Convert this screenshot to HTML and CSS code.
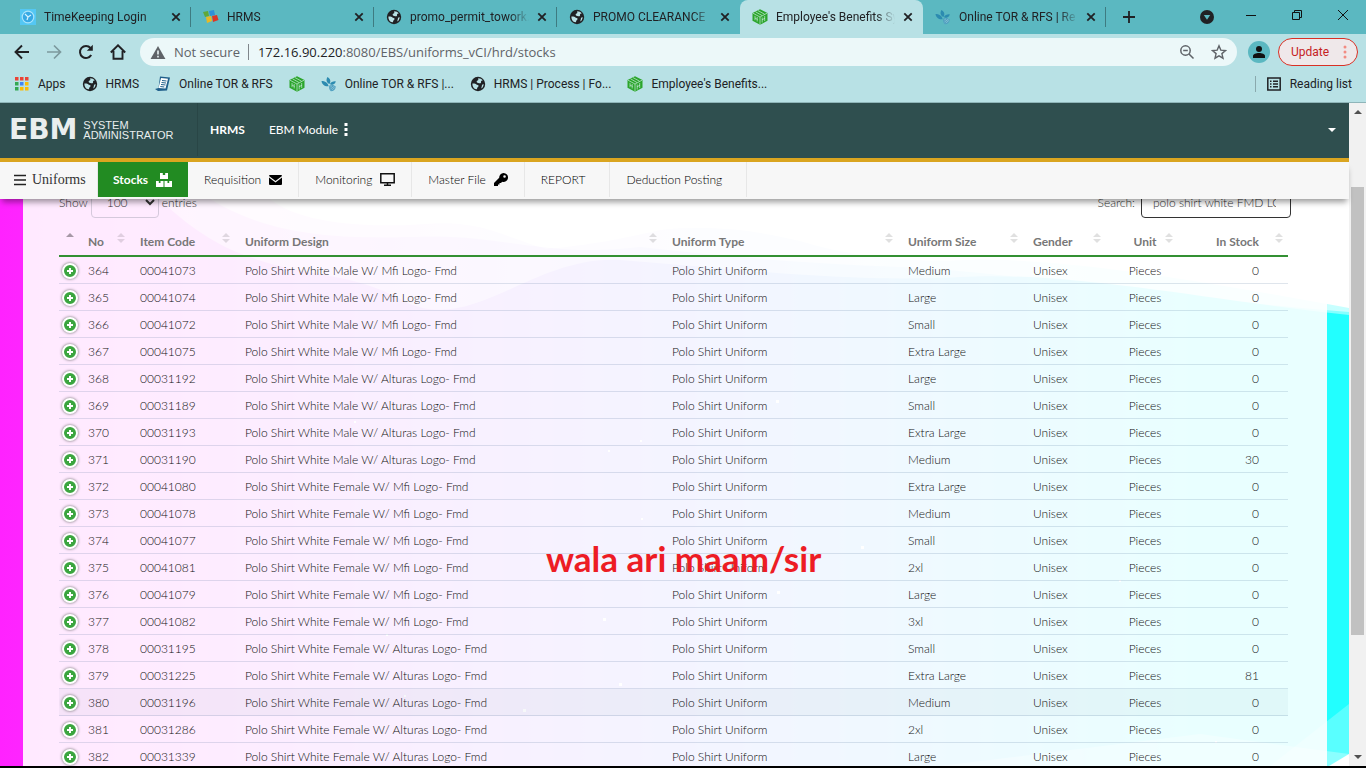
FILE: index.html
```html
<!DOCTYPE html>
<html lang="en">
<head>
<meta charset="utf-8">
<meta name="viewport" content="width=device-width, initial-scale=1">
<title>Employee's Benefits System</title>
<link rel="stylesheet" href="styles.css">
</head>
<body>
<svg class="symbols" aria-hidden="true">
  <symbol id="globe" viewBox="0 0 16 16"><circle cx="8" cy="8" r="7.2" fill="#202124"/><path d="M2.4 7.6c1.6-.4 3.200.1 4 .9.700.600 1.900.300 2.200 1.300.2 1-.900 1.200-1.300 1.900-.300.6-.1 1.500-1 1.600C4 13.300 2.300 10.600 2.400 7.600zM8.300 2.300c1.900 0 3.400.7 4.500 2.300-.8.2-1.400.1-1.700.700-.3.7.3 1.200-.3 1.700-.8.600-1.700 0-2.600-.1C7 6.700 6.300 6 6.800 5c.3-.7 1.300-.6 1.500-1.300.1-.5-.3-.9 0-1.400zM13.500 8c.2 1.900-.700 3.600-2 4.500-.3-.9.200-1.600.3-2.500.1-1 .7-1.700 1.700-2z" fill="#b8e1e5"/></symbol>
  <symbol id="cube" viewBox="0 0 16 16"><path d="M8 .2 15.500 4v7.800L8 15.800.5 11.800V4z" fill="#2ba52b"/><path d="M1 4.200 8 8l7-3.800M8 8v7.500M3.500 2.800 10 6.500M6 1.600l6.500 3.600M3 6.900v4.300M5.200 8v4.500M3 9l2.500 1.500M10.200 8.500v5M12.700 7v5M10 10.800l3-1.600" fill="none" stroke="#c9ebdc" stroke-width=".7"/></symbol>
  <symbol id="leaf" viewBox="0 0 16 16"><path d="M6.500 1c3 1.500 3.600 4.500 2 7C5.500 6.500 4.700 4 6.500 1zM.5 5c3.500 0 6.200 1.500 7.200 5.300C3.600 10.800 1 8.500.5 5zM9 8c1-2.200 3-3 5.800-2.800-.5 2.600-2.300 3.600-5 3.600z" fill="#2c8bb0"/><path d="M8.300 9.500c2.700-1 5-.5 6.500 1-.2 3-2.100 4.700-4.900 4.700-1.700-1.300-2.100-3.400-1.600-5.700z" fill="#4f9fc0"/><path d="m9.500 13 4-3M10.800 14l3-2.500M9.300 11l1.800-1.300" stroke="#a5d4de" stroke-width=".6"/></symbol>
  <symbol id="x" viewBox="0 0 10 10"><path d="m1.300 1.300 7.400 7.400m0-7.400L1.300 8.700" stroke="#202124" stroke-width="1.800"/></symbol>
</svg>

<header class="browser">
  <div class="tabstrip">
    <div class="tab"><svg class="ico" viewBox="0 0 16 16"><path fill="#54c7f3" d="M0 0h16v16H0z"/><circle cx="8" cy="8" r="5.800" fill="#38a9e4" stroke="#a9e4fb" stroke-width="1.200"/><path d="m5 5 3 3 3-2M8 8l-1 3" fill="none" stroke="#d4f3ff" stroke-width="1.200"/></svg><span class="tab-title">TimeKeeping Login</span><button class="close" aria-label="Close tab"><svg><use href="#x"/></svg></button></div>
    <div class="tab"><svg class="ico" viewBox="0 0 16 16"><path fill="#5fa83a" d="m0 3 5-1 1 5-4 1z"/><path fill="#2f8fd8" d="m6 2 5-1 1 5-5 1z"/><path fill="#e8b923" d="m3 8 5-1 1 5-5 2z"/><path fill="#dd3526" d="m9 7 5-1 1.500 5-5.500 2z"/></svg><span class="tab-title">HRMS</span><button class="close" aria-label="Close tab"><svg><use href="#x"/></svg></button></div>
    <div class="tab"><svg class="ico"><use href="#globe"/></svg><span class="tab-title">promo_permit_towork.</span><button class="close" aria-label="Close tab"><svg><use href="#x"/></svg></button></div>
    <div class="tab plain"><svg class="ico"><use href="#globe"/></svg><span class="tab-title">PROMO CLEARANCE</span><button class="close" aria-label="Close tab"><svg><use href="#x"/></svg></button></div>
    <div class="tab active"><svg class="ico"><use href="#cube"/></svg><span class="tab-title">Employee's Benefits Sy</span><button class="close" aria-label="Close tab"><svg><use href="#x"/></svg></button></div>
    <div class="tab"><svg class="ico"><use href="#leaf"/></svg><span class="tab-title">Online TOR &amp; RFS | Re</span><button class="close" aria-label="Close tab"><svg><use href="#x"/></svg></button></div>
    <button class="newtab" aria-label="New tab"><svg viewBox="0 0 12 12"><path d="M6 0v12M0 6h12" stroke="#202124" stroke-width="1.800"/></svg></button>
    <div class="window-controls">
      <button aria-label="Search tabs"><svg width="14" height="14" viewBox="0 0 14 14"><circle cx="7" cy="7" r="7" fill="#202124"/><path d="M3.800 5h6.400L7 9.800z" fill="#5bb8c1"/></svg></button>
      <button aria-label="Minimize"><svg width="10" height="10" viewBox="0 0 10 10"><path d="M0 5.500h10" stroke="#111"/></svg></button>
      <button aria-label="Restore"><svg width="10" height="10" viewBox="0 0 10 10"><path d="M.5 2.500h7v7h-7zM2.500 2.500v-2h7v7h-2" fill="none" stroke="#111"/></svg></button>
      <button aria-label="Close"><svg width="10" height="10" viewBox="0 0 10 10"><path d="m0 0 10 10M10 0 0 10" stroke="#111"/></svg></button>
    </div>
  </div>

  <div class="toolbar">
    <button aria-label="Back"><svg viewBox="0 0 16 16"><path d="M15 8H2M8 1.500 1.500 8 8 14.500" fill="none" stroke="#202124" stroke-width="1.900"/></svg></button>
    <button aria-label="Forward"><svg viewBox="0 0 16 16"><path d="M1 8h13M8 1.500 14.500 8 8 14.500" fill="none" stroke="#7c999d" stroke-width="1.700"/></svg></button>
    <button aria-label="Reload"><svg viewBox="0 0 16 16"><path d="M13.200 11A6 6 0 1 1 12.500 4" fill="none" stroke="#202124" stroke-width="2"/><path d="M14.800.8v6H8.800z" fill="#202124"/></svg></button>
    <button aria-label="Home"><svg viewBox="0 0 16 16"><path d="M.8 8.500 8 1.300l7.200 7.200M3.500 7v7.800h9V7" fill="none" stroke="#202124" stroke-width="1.900"/></svg></button>
    <div class="omnibox">
      <svg class="warn" viewBox="0 0 16 14"><path d="M8 0 16 14H0z" fill="#5f6368"/><path d="M8 4.800v4.400m0 1.300v1.800" stroke="#ecf8f9" stroke-width="1.700"/></svg>
      <span class="insecure">Not secure</span>
      <span class="url"><b>172.16.90.220</b>:8080/EBS/uniforms_vCI/hrd/stocks</span>
      <svg class="ico" viewBox="0 0 16 16"><circle cx="6.500" cy="6.500" r="4.700" fill="none" stroke="#5f6368" stroke-width="1.500"/><path d="m10 10 4.500 4.500M4.200 6.500h4.600" stroke="#5f6368" stroke-width="1.500"/></svg>
      <svg class="ico" viewBox="0 0 16 16"><path d="m8 1.800 1.800 4.300 4.700.4-3.600 3.100 1.100 4.600L8 11.800l-4 2.400 1.100-4.600-3.600-3.100 4.700-.4z" fill="none" stroke="#5f6368" stroke-width="1.400"/></svg>
    </div>
    <button class="avatar" aria-label="Profile"><svg viewBox="0 0 22 22"><circle cx="11" cy="11" r="11" fill="#5bb8c1"/><circle cx="11" cy="8" r="3" fill="#111"/><path d="M5 17v-2c0-2 3-3 6-3s6 1 6 3v2z" fill="#111"/></svg></button>
    <button class="update">Update<svg viewBox="0 0 4 14"><g fill="#f28b82"><circle cx="2" cy="2" r="1.500"/><circle cx="2" cy="7" r="1.500"/><circle cx="2" cy="12" r="1.500"/></g></svg></button>
  </div>

  <nav class="bookmarks">
    <a href="#"><svg class="ico" viewBox="0 0 16 16"><path fill="#ea4335" d="M1 1h3.500v3.500H1zM6 1h3.500v3.500H6zM11 1h3.500v3.500H11z"/><path fill="#34a853" d="M1 6h3.500v3.500H1zM1 11h3.500v3.500H1z"/><path fill="#4285f4" d="M6 6h3.500v3.500H6z"/><path fill="#fbbc05" d="M11 6h3.500v3.500H11zM6 11h3.500v3.500H6zM11 11h3.500v3.500H11z"/></svg>Apps</a>
    <a href="#"><svg class="ico"><use href="#globe"/></svg>HRMS</a>
    <a href="#"><svg class="ico" viewBox="0 0 16 16"><path d="m5 .5 10 1-3 13-9 .5-3-2 3.500-1z" fill="#205f8b"/><path d="m6 2 7 .8-2.500 9.700-7-.5z" fill="#fff"/><path d="m7 4.500 4.500.5M6.500 6.500l4.500.5M6 8.500l4.500.5M5.300 10.500l4 .5" stroke="#205f8b"/></svg>Online TOR &amp; RFS</a>
    <a href="#" aria-label="Employee's Benefits"><svg class="ico"><use href="#cube"/></svg></a>
    <a href="#"><svg class="ico"><use href="#leaf"/></svg>Online TOR &amp; RFS |...</a>
    <a href="#"><svg class="ico"><use href="#globe"/></svg>HRMS | Process | Fo...</a>
    <a href="#"><svg class="ico"><use href="#cube"/></svg>Employee's Benefits...</a>
    <a href="#" class="reading"><svg class="ico" viewBox="0 0 16 16"><path d="M1.800 2h12.400v12H1.800z" fill="none" stroke="#202124" stroke-width="1.500"/><path d="M4 5.200h1.500M7 5.200h5M4 8h1.500M7 8h5M4 10.800h1.500M7 10.800h5" stroke="#202124" stroke-width="1.400"/></svg>Reading list</a>
  </nav>
</header>

<div class="viewport">
  <div class="page">
    <header class="appbar">
      <a href="#" class="brand"><strong>EBM</strong><span>SYSTEM<br>ADMINISTRATOR</span></a>
      <a href="#" class="top-link current">HRMS</a>
      <a href="#" class="top-link">EBM Module<svg width="4" height="13" viewBox="0 0 4 13"><path d="M.5 0h3v3h-3zM.5 5h3v3h-3zM.5 10h3v3h-3z" fill="#fff"/></svg></a>
      <button class="account" aria-label="Account menu"></button>
    </header>
    <nav class="menu">
      <a href="#" class="menu-brand"><svg width="12" height="12" viewBox="0 0 12 12"><path d="M0 1.500h12M0 6h12M0 10.500h12" stroke="#222" stroke-width="1.600"/></svg>Uniforms</a>
      <a href="#" class="selected">Stocks<svg width="16" height="14" viewBox="0 0 16 14"><path d="M4 0h2.800v2h2.400V0H12v6H4zM0 8h2.800v2h1.700V8h3v6H0zM8.500 8h3v2h1.700V8H16v6H8.500z" fill="#fff"/></svg></a>
      <a href="#">Requisition<svg width="13" height="10" viewBox="0 0 13 10"><path d="M1 0h11q1 0 1 1L6.500 6 0 1q0-1 1-1zM0 2.500l6.500 5 6.500-5V9q0 1-1 1H1q-1 0-1-1z"/></svg></a>
      <a href="#">Monitoring<svg width="15" height="13" viewBox="0 0 15 13"><path d="M.8.800h13.400v8.900H.8zM7.500 10v2M4 12.300h7" fill="none" stroke="#111" stroke-width="1.500"/></svg></a>
      <a href="#">Master File<svg width="14" height="14" viewBox="0 0 14 14"><path fill-rule="evenodd" d="M9.500 0a4.500 4.500 0 1 1-1.300 8.800L7 10H5.500v1.500H4V13H0v-3l5.200-5.200A4.500 4.500 0 0 1 9.500 0zm1 2.200a1.300 1.300 0 1 0 .1 2.600 1.300 1.300 0 0 0-.1-2.600z"/></svg></a>
      <a href="#" class="wide">REPORT</a>
      <a href="#" class="wide">Deduction Posting</a>
    </nav>
    <main class="scene">
      <svg class="waves" viewBox="0 0 1349 567" preserveAspectRatio="none" aria-hidden="true">
        <defs><linearGradient id="sky"><stop offset="0" stop-color="#ff22ff"/><stop offset=".12" stop-color="#f638ff"/><stop offset=".5" stop-color="#8f8fff"/><stop offset=".9" stop-color="#22ffff"/><stop offset="1" stop-color="#22ffff"/></linearGradient></defs>
        <g fill="url(#sky)">
          <path opacity=".25" d="M0 0H270C300 25 370 29 425 25S500 36 546 50C590 46 620 40 660 31C710 25 760 32 800 42C840 54 900 66 980 60C1100 63 1210 84 1349 109V567H0z"/>
          <path opacity=".4" d="M0 0H210C290 50 390 36 450 38S560 58 640 48C730 58 800 64 900 68S1180 100 1349 113V567H0z"/>
          <path d="M0 0H160C250 90 330 60 400 100S530 56 620 61C740 70 850 84 960 78S1200 100 1349 116V567H0z"/>
        </g>
        <g fill="#fff"><path opacity=".25" d="M1349 505 1270 567h79z"/><path opacity=".3" d="M940 567 1200 535l149 20v12z"/><path d="m1329 567 20-12v12z"/>
          <path d="M776 201h3v3h-3zM640 241h2v2h-2zM354 222h2v2h-2zM608 251h2v2h-2zM641 319h2v2h-2zM861 347h3v3h-3zM777 392h3v3h-3zM603 419h3v3h-3zM386 435h2v2h-2zM404 496h2v2h-2zM619 484h3v3h-3zM523 510h3v3h-3zM1119 381h2v2h-2zM1215 542h2v2h-2z"/></g>
      </svg>
      <section class="card">
        <div class="controls">
          <label class="length">Show <select><option>100</option></select> entries</label>
          <label class="search">Search: <input type="text" value="polo shirt white FMD LOGO"></label>
        </div>
        <table class="stocks">
          <colgroup><col class="c-plus"><col class="c-no"><col class="c-code"><col><col class="c-type"><col class="c-size"><col class="c-gender"><col class="c-unit"><col class="c-stock"></colgroup>
          <thead><tr><th class="asc"></th><th>No</th><th>Item Code</th><th>Uniform Design</th><th>Uniform Type</th><th>Uniform Size</th><th>Gender</th><th>Unit</th><th>In Stock</th></tr></thead>
          <tbody>
            <tr><td><button class="plus" aria-label="Expand"></button></td><td>364</td><td>00041073</td><td>Polo Shirt White Male W/ Mfi Logo- Fmd</td><td>Polo Shirt Uniform</td><td>Medium</td><td>Unisex</td><td>Pieces</td><td>0</td></tr>
            <tr><td><button class="plus" aria-label="Expand"></button></td><td>365</td><td>00041074</td><td>Polo Shirt White Male W/ Mfi Logo- Fmd</td><td>Polo Shirt Uniform</td><td>Large</td><td>Unisex</td><td>Pieces</td><td>0</td></tr>
            <tr><td><button class="plus" aria-label="Expand"></button></td><td>366</td><td>00041072</td><td>Polo Shirt White Male W/ Mfi Logo- Fmd</td><td>Polo Shirt Uniform</td><td>Small</td><td>Unisex</td><td>Pieces</td><td>0</td></tr>
            <tr><td><button class="plus" aria-label="Expand"></button></td><td>367</td><td>00041075</td><td>Polo Shirt White Male W/ Mfi Logo- Fmd</td><td>Polo Shirt Uniform</td><td>Extra Large</td><td>Unisex</td><td>Pieces</td><td>0</td></tr>
            <tr><td><button class="plus" aria-label="Expand"></button></td><td>368</td><td>00031192</td><td>Polo Shirt White Male W/ Alturas Logo- Fmd</td><td>Polo Shirt Uniform</td><td>Large</td><td>Unisex</td><td>Pieces</td><td>0</td></tr>
            <tr><td><button class="plus" aria-label="Expand"></button></td><td>369</td><td>00031189</td><td>Polo Shirt White Male W/ Alturas Logo- Fmd</td><td>Polo Shirt Uniform</td><td>Small</td><td>Unisex</td><td>Pieces</td><td>0</td></tr>
            <tr><td><button class="plus" aria-label="Expand"></button></td><td>370</td><td>00031193</td><td>Polo Shirt White Male W/ Alturas Logo- Fmd</td><td>Polo Shirt Uniform</td><td>Extra Large</td><td>Unisex</td><td>Pieces</td><td>0</td></tr>
            <tr><td><button class="plus" aria-label="Expand"></button></td><td>371</td><td>00031190</td><td>Polo Shirt White Male W/ Alturas Logo- Fmd</td><td>Polo Shirt Uniform</td><td>Medium</td><td>Unisex</td><td>Pieces</td><td>30</td></tr>
            <tr><td><button class="plus" aria-label="Expand"></button></td><td>372</td><td>00041080</td><td>Polo Shirt White Female W/ Mfi Logo- Fmd</td><td>Polo Shirt Uniform</td><td>Extra Large</td><td>Unisex</td><td>Pieces</td><td>0</td></tr>
            <tr><td><button class="plus" aria-label="Expand"></button></td><td>373</td><td>00041078</td><td>Polo Shirt White Female W/ Mfi Logo- Fmd</td><td>Polo Shirt Uniform</td><td>Medium</td><td>Unisex</td><td>Pieces</td><td>0</td></tr>
            <tr><td><button class="plus" aria-label="Expand"></button></td><td>374</td><td>00041077</td><td>Polo Shirt White Female W/ Mfi Logo- Fmd</td><td>Polo Shirt Uniform</td><td>Small</td><td>Unisex</td><td>Pieces</td><td>0</td></tr>
            <tr><td><button class="plus" aria-label="Expand"></button></td><td>375</td><td>00041081</td><td>Polo Shirt White Female W/ Mfi Logo- Fmd</td><td>Polo Shirt Uniform</td><td>2xl</td><td>Unisex</td><td>Pieces</td><td>0</td></tr>
            <tr><td><button class="plus" aria-label="Expand"></button></td><td>376</td><td>00041079</td><td>Polo Shirt White Female W/ Mfi Logo- Fmd</td><td>Polo Shirt Uniform</td><td>Large</td><td>Unisex</td><td>Pieces</td><td>0</td></tr>
            <tr><td><button class="plus" aria-label="Expand"></button></td><td>377</td><td>00041082</td><td>Polo Shirt White Female W/ Mfi Logo- Fmd</td><td>Polo Shirt Uniform</td><td>3xl</td><td>Unisex</td><td>Pieces</td><td>0</td></tr>
            <tr><td><button class="plus" aria-label="Expand"></button></td><td>378</td><td>00031195</td><td>Polo Shirt White Female W/ Alturas Logo- Fmd</td><td>Polo Shirt Uniform</td><td>Small</td><td>Unisex</td><td>Pieces</td><td>0</td></tr>
            <tr><td><button class="plus" aria-label="Expand"></button></td><td>379</td><td>00031225</td><td>Polo Shirt White Female W/ Alturas Logo- Fmd</td><td>Polo Shirt Uniform</td><td>Extra Large</td><td>Unisex</td><td>Pieces</td><td>81</td></tr>
            <tr class="hovered"><td><button class="plus" aria-label="Expand"></button></td><td>380</td><td>00031196</td><td>Polo Shirt White Female W/ Alturas Logo- Fmd</td><td>Polo Shirt Uniform</td><td>Medium</td><td>Unisex</td><td>Pieces</td><td>0</td></tr>
            <tr><td><button class="plus" aria-label="Expand"></button></td><td>381</td><td>00031286</td><td>Polo Shirt White Female W/ Alturas Logo- Fmd</td><td>Polo Shirt Uniform</td><td>2xl</td><td>Unisex</td><td>Pieces</td><td>0</td></tr>
            <tr><td><button class="plus" aria-label="Expand"></button></td><td>382</td><td>00031339</td><td>Polo Shirt White Female W/ Alturas Logo- Fmd</td><td>Polo Shirt Uniform</td><td>Large</td><td>Unisex</td><td>Pieces</td><td>0</td></tr>
          </tbody>
        </table>
      </section>
      <p class="annotation">wala ari maam/sir</p>
    </main>
  </div>
  <div class="scrollbar" aria-hidden="true"><span class="up"></span><span class="thumb"></span><span class="down"></span></div>
</div>
</body>
</html>
```
FILE: styles.css
```css
* { box-sizing: border-box; }
body {
  margin: 0;
  height: 100vh;
  display: flex;
  flex-direction: column;
  overflow: hidden;
  border-bottom: 2px solid #000;
  font-family: Lato, "Open Sans", sans-serif;
  font-size: 12px;
  color: #111;
}
a { color: inherit; text-decoration: none; }
button { border: 0; padding: 0; background: none; font: inherit; color: inherit; display: flex; align-items: center; justify-content: center; }
svg { display: block; flex: none; }
.symbols { position: absolute; width: 0; height: 0; }
.ico { width: 16px; height: 16px; }

/* Browser frame */
.browser { flex: none; background: #b8e1e5; border-bottom: 1px solid #8fb5b9; font-family: Roboto, "Open Sans", sans-serif; color: #202124; }
.tabstrip { display: flex; height: 34px; padding-left: 8px; background: #5bb8c1; }
.tab { flex: 0 1 183px; min-width: 0; display: flex; align-items: center; gap: 8px; padding: 0 10px 0 12px; position: relative; }
.tab::after { content: ""; position: absolute; right: 0; top: 7px; height: 20px; width: 1px; background: #3e7b81; }
.tab.plain::after, .tab.active::after { display: none; }
.tab.active { background: #b8e1e5; border-radius: 8px 8px 0 0; }
.tab-title { flex: 1; min-width: 0; overflow: hidden; white-space: nowrap; mask-image: linear-gradient(90deg, #000 84%, transparent); }
.close svg { width: 10px; height: 10px; }
.newtab { width: 46px; }
.newtab svg { width: 12px; height: 12px; }
.window-controls { margin-left: auto; display: flex; padding-bottom: 4px; }
.window-controls button { width: 46px; }
.window-controls button:first-child { width: 42px; padding-top: 4px; }
.toolbar { display: flex; align-items: center; height: 36px; padding: 0 8px 0 14px; gap: 16px; }
.toolbar > button svg { width: 16px; height: 16px; }
.omnibox { flex: 1; display: flex; align-items: center; height: 28px; margin-left: -2px; padding: 0 10px; gap: 16px; border-radius: 14px; background: #ecf8f9; font-family: "Open Sans", sans-serif; font-size: 13px; color: #5f6368; }
.warn { width: 16px; height: 13px; }
.insecure { margin-left: -8px; padding-right: 8px; line-height: 16px; border-right: 1px solid #80868b; }
.url { flex: 1; margin-left: -7px; }
.url b { font-weight: 400; color: #202124; }
.toolbar .avatar { margin-left: -5px; }
.toolbar .avatar svg { width: 22px; height: 22px; }
.toolbar .update { height: 28px; margin-left: -8px; padding: 0 10px 0 12px; gap: 14px; border: 1px solid #d93025; border-radius: 14px; background: #efe8ea; color: #c5221f; }
.toolbar .update svg { width: 4px; height: 14px; }
.bookmarks { display: flex; align-items: center; height: 32px; padding: 0 14px 4px; gap: 16px; }
.bookmarks a { display: flex; align-items: center; gap: 8px; white-space: nowrap; }
.bookmarks .reading { margin-left: auto; padding-left: 10px; border-left: 1px solid #8aa9ad; }

/* Page frame */
.viewport { flex: 1; min-height: 0; display: flex; }
.page { flex: 1; min-width: 0; display: flex; flex-direction: column; }
.scrollbar { flex: none; width: 17px; background: #f1f1f1; display: flex; flex-direction: column; align-items: center; padding: 7px 0; }
.thumb { width: 13px; height: 69%; margin-top: 73px; margin-bottom: auto; background: #c1c1c1; }
.up { border: 4px solid transparent; border-top: 0; border-bottom-color: #505050; }
.down { border: 4px solid transparent; border-bottom: 0; border-top-color: #505050; }

.appbar { flex: none; display: flex; align-items: center; height: 59px; padding-bottom: 2px; background: #2f4f4f; border-bottom: 4px solid #daa520; color: #fff; }
.brand { display: flex; align-items: center; align-self: stretch; gap: 6px; width: 198px; padding-left: 9px; border-right: 1px solid #294646; font-family: "Liberation Sans", sans-serif; font-size: 11px; line-height: 10px; color: #e9eeee; }
.brand strong { font-family: "DejaVu Sans", sans-serif; font-size: 28px; line-height: 28px; }
.top-link { display: flex; align-items: center; gap: 6px; padding: 0 12px; }
.top-link.current { font-weight: 700; }
.account { margin-left: auto; margin-right: 13px; border: 4px solid transparent; border-top-color: #fff; border-bottom: 0; }

.menu { flex: none; position: relative; z-index: 2; display: flex; height: 37px; padding-bottom: 2px; background: #f7f7f7; box-shadow: 0 5px 6px -2px rgba(0, 0, 0, .4); color: #000; font-weight: 300; }
.menu a { display: flex; align-items: center; gap: 8px; padding: 0 16px; border-right: 1px solid #e7e7e7; white-space: nowrap; }
.menu .menu-brand { width: 98px; padding: 0 0 0 14px; gap: 6px; font: 14px "Liberation Serif", serif; color: #333; }
.menu .selected { padding: 0 15px; background: #228b22; border-color: #228b22; color: #fff; font-weight: 700; }
.menu .wide { padding-right: 24px; }

.scene { flex: 1; min-height: 0; position: relative; overflow: hidden; padding: 0 22px 0 23px; background: #fff; font-weight: 300; }
.waves { position: absolute; inset: 0; width: 100%; height: 100%; }
.card { position: relative; min-height: 100%; padding: 0 39px 0 36px; background: rgba(255, 255, 255, .9); }
.controls { display: flex; justify-content: space-between; height: 31px; margin: -12px -3px 8px 0; color: #333; }
.card::before { content: ""; display: table; }
.controls label { display: flex; align-items: center; gap: 3px; }
.controls select, .controls input { height: 31px; border-radius: 4px; background: transparent; font: inherit; color: #333; }
.controls select { width: 68px; padding: 0 0 0 11px; border: 1px solid #d5c9dc; }
.controls input { width: 150px; padding: 0 14px 0 11px; border: 1px solid #333; }
.controls .search { gap: 6px; }

.stocks { width: 100%; table-layout: fixed; border-collapse: separate; border-spacing: 0; }
.c-plus { width: 19px; }
.c-no { width: 52px; }
.c-code { width: 105px; }
.c-type { width: 236px; }
.c-size { width: 125px; }
.c-gender { width: 83px; }
.c-unit { width: 72px; }
.c-stock { width: 110px; }
.stocks th { position: relative; height: 31px; padding: 2px 0 0 10px; border-bottom: 2px solid #339033; text-align: left; color: #777; font-weight: 700; white-space: nowrap; }
.stocks td { height: 27px; padding: 1px 0 0 10px; border-bottom: 1px solid rgba(40, 80, 130, .15); white-space: nowrap; }
.stocks td:first-child { padding-left: 3px; }
.stocks th:nth-child(8), .stocks td:nth-child(8) { padding-left: 6px; text-align: center; }
.stocks th:nth-child(9), .stocks td:nth-child(9) { padding-left: 0; padding-right: 29px; text-align: right; }
.stocks th::before, .stocks th::after { content: ""; position: absolute; right: 5px; border: 4px solid transparent; opacity: .12; }
.stocks th::before { top: 7px; border-top: 0; border-bottom-color: #000; }
.stocks th::after { top: 13px; border-bottom: 0; border-top-color: #000; }
.stocks th.asc::before { right: 4px; opacity: .35; }
.stocks th.asc::after { display: none; }
.hovered td { background: rgba(0, 60, 90, .035); }
.plus { position: relative; width: 16px; height: 16px; border: 2px solid #fff; border-radius: 50%; background: #3ba53f; box-shadow: 0 0 3px #666; }
.plus::before, .plus::after { content: ""; position: absolute; background: #fff; width: 6px; height: 2px; }
.plus::after { width: 2px; height: 6px; }

.annotation { position: absolute; left: 546px; top: 337px; margin: 0; font-size: 35px; line-height: 44px; font-weight: 700; color: #ed1c24; white-space: nowrap; }
```
